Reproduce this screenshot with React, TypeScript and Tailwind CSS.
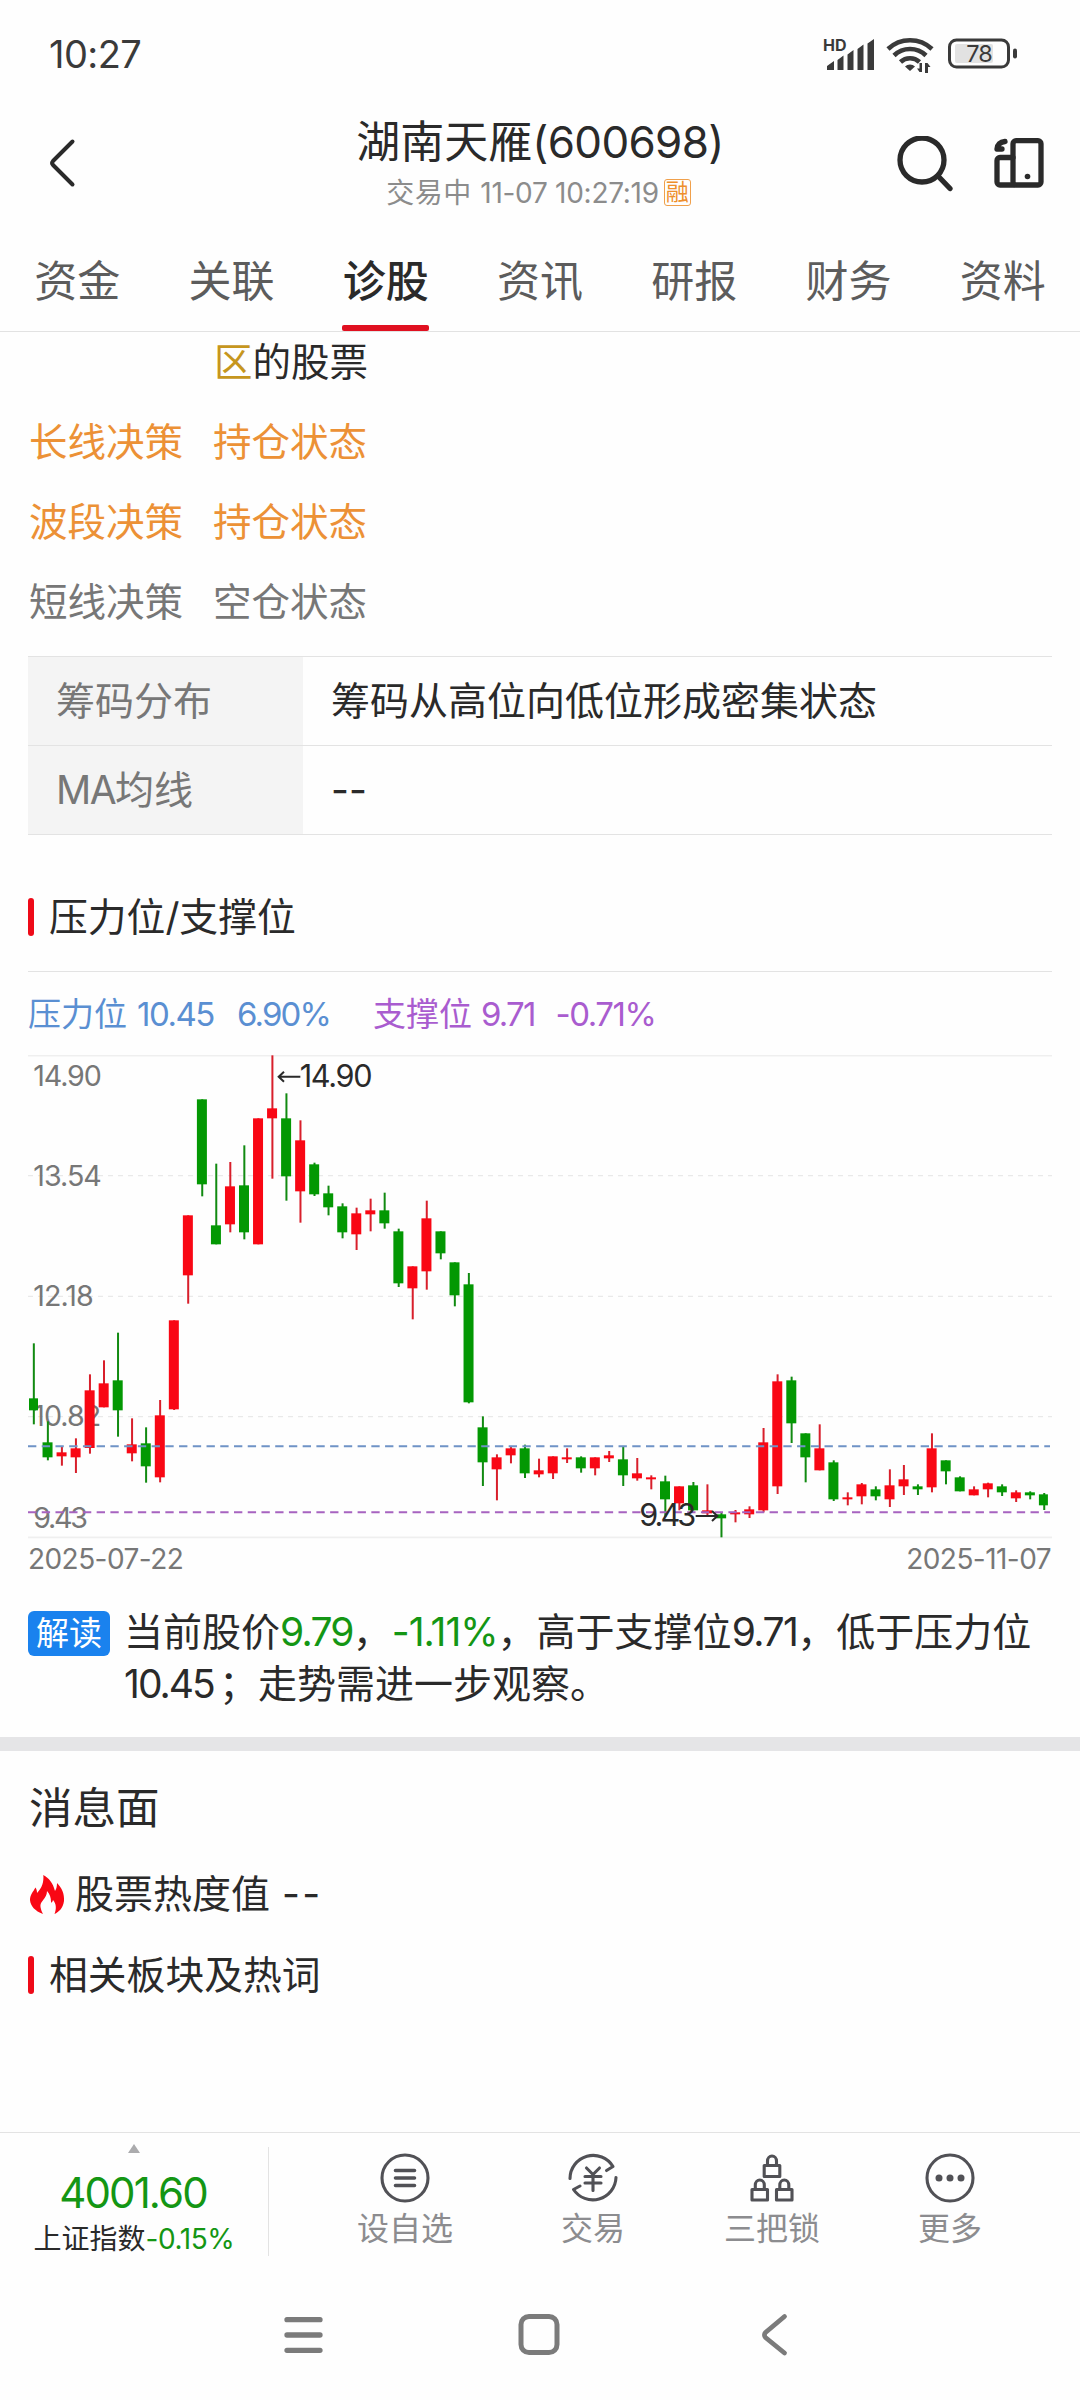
import type { ReactNode } from "react";

const TABS = ["资金", "关联", "诊股", "资讯", "研报", "财务", "资料"];

const DECISIONS = [
  { label: "长线决策", value: "持仓状态", className: "text-[#ec9136]" },
  { label: "波段决策", value: "持仓状态", className: "text-[#ec9136]" },
  { label: "短线决策", value: "空仓状态", className: "text-[#777777]" },
];

// [high, body top, body bottom, low, rising] in chart units, top of the scale = 75
const CANDLES: [number, number, number, number, 0 | 1][] = [
  [939, 1104, 1140, 1182, 0],
  [1173, 1236, 1281, 1290, 0],
  [1250, 1266, 1278, 1306, 1],
  [1224, 1254, 1281, 1328, 1],
  [1032, 1080, 1253, 1270, 1],
  [990, 1059, 1131, 1131, 1],
  [907, 1050, 1140, 1219, 0],
  [1164, 1242, 1269, 1293, 1],
  [1191, 1239, 1308, 1357, 0],
  [1109, 1155, 1341, 1356, 1],
  [870, 870, 1137, 1139, 1],
  [555, 555, 735, 820, 1],
  [207, 207, 462, 498, 0],
  [400, 585, 642, 642, 0],
  [395, 468, 582, 606, 1],
  [345, 465, 606, 627, 0],
  [264, 264, 642, 642, 1],
  [75, 234, 264, 445, 1],
  [189, 264, 438, 511, 0],
  [270, 330, 483, 577, 1],
  [397, 402, 492, 497, 0],
  [466, 489, 531, 555, 0],
  [519, 528, 606, 624, 0],
  [532, 549, 612, 659, 1],
  [505, 540, 552, 603, 1],
  [487, 540, 579, 595, 0],
  [595, 603, 759, 770, 0],
  [708, 708, 774, 867, 1],
  [511, 564, 723, 778, 1],
  [603, 603, 669, 687, 0],
  [696, 696, 795, 828, 0],
  [728, 762, 1116, 1119, 0],
  [1158, 1191, 1296, 1367, 0],
  [1272, 1281, 1317, 1410, 1],
  [1250, 1254, 1275, 1299, 1],
  [1243, 1254, 1329, 1343, 0],
  [1285, 1320, 1332, 1341, 1],
  [1278, 1278, 1329, 1346, 1],
  [1254, 1281, 1287, 1298, 1],
  [1278, 1281, 1314, 1327, 0],
  [1281, 1281, 1314, 1335, 1],
  [1262, 1275, 1284, 1295, 1],
  [1250, 1287, 1335, 1367, 0],
  [1283, 1329, 1344, 1351, 1],
  [1335, 1341, 1347, 1377, 1],
  [1336, 1353, 1407, 1460, 0],
  [1368, 1368, 1419, 1440, 1],
  [1355, 1365, 1440, 1440, 0],
  [1362, 1440, 1449, 1459, 1],
  [1447, 1452, 1464, 1521, 0],
  [1439, 1446, 1452, 1476, 1],
  [1428, 1437, 1452, 1463, 1],
  [1193, 1236, 1440, 1446, 1],
  [1032, 1053, 1368, 1391, 1],
  [1039, 1050, 1179, 1238, 0],
  [1209, 1209, 1281, 1356, 0],
  [1182, 1254, 1320, 1320, 1],
  [1290, 1296, 1407, 1412, 0],
  [1386, 1401, 1407, 1425, 1],
  [1358, 1362, 1398, 1422, 1],
  [1368, 1377, 1398, 1410, 0],
  [1317, 1365, 1407, 1430, 1],
  [1304, 1347, 1368, 1394, 1],
  [1362, 1368, 1377, 1394, 0],
  [1209, 1254, 1371, 1386, 1],
  [1290, 1290, 1323, 1362, 0],
  [1338, 1341, 1383, 1383, 0],
  [1368, 1377, 1395, 1395, 1],
  [1357, 1359, 1377, 1401, 1],
  [1362, 1368, 1386, 1397, 0],
  [1380, 1386, 1404, 1415, 1],
  [1383, 1386, 1395, 1407, 0],
  [1388, 1392, 1425, 1439, 0],
];

const AXIS = [
  { text: "14.90", y: 168, spacing: -3.5 },
  { text: "13.54", y: 467, spacing: -3 },
  { text: "12.18", y: 827, spacing: -3 },
  { text: "10.82", y: 1187, spacing: -3 },
  { text: "9.43", y: 1494, spacing: -7 },
];

function StatusBar() {
  return (
    <div className="h-[108px] pl-[49px] pr-[62px] flex items-center justify-between text-[#3a3a3a]">
      <span className="text-[38px] leading-none tracking-[-0.015em]">10:27</span>
      <svg width="194" height="38" viewBox="0 0 194 38" fill="currentColor" className="mt-1 overflow-visible">
        <text x="-1" y="13.500" fontSize="16" fontWeight="700">HD</text>
        <path d="M3 33v-4l7-5v9zM13.500 33v-10l6-4.500v14.500zM23.500 33v-15.500l6-4.500v20zM33.500 33v-21l6-4.500v25.500zM43.500 33v-26.500l6.500-4.500v31z" />
        <g fill="none" stroke="currentColor" strokeWidth="4.600">
          <path d="M64 12a32 32 0 0 1 44 0" />
          <path d="M70 18.500a23 23 0 0 1 32 0" />
          <path d="M76.500 25a14 14 0 0 1 19 0" />
        </g>
        <path d="M86 34l-5-4.500a7 7 0 0 1 10 0z" />
        <path d="M98 26v9h-2.500l-2.500-3.500h2.500v-5.500zM101 36v-10h2.500l3 4h-2.500v6z" />
        <rect x="125.500" y="3" width="59" height="27" rx="7" fill="none" stroke="currentColor" strokeWidth="3" />
        <rect x="131" y="7" width="38" height="19" rx="2" fill="#e2e2e2" />
        <rect x="189" y="11.500" width="4" height="10" rx="2" />
        <text x="155" y="25" fontSize="23.500" textAnchor="middle" letterSpacing="-1">78</text>
      </svg>
    </div>
  );
}

function Header() {
  return (
    <header className="h-[126px] flex items-start justify-between pl-[48px] pr-[36px] text-[#2a2a2a]">
      <svg width="136" height="54" viewBox="0 0 136 54" fill="none" stroke="currentColor" strokeWidth="4" strokeLinecap="round" strokeLinejoin="round" className="mt-[28px]">
        <path d="M24.500 5.500L5 25a3 3 0 0 0 0 4L24.500 48.500" />
      </svg>
      <div className="flex flex-col items-center">
        <h1 className="h-[68px] flex items-center text-[44px] leading-none whitespace-nowrap">
          湖南天雁<span className="tracking-[-0.015em]">(600698)</span>
        </h1>
        <div className="h-[33px] flex items-center gap-[5px] text-[28px] leading-none text-[#8c8c8c] whitespace-nowrap -ml-[3px]">
          <span className="tracking-[0.02em]">
            交易中 <span className="tracking-[-0.01em]">11-07 10:27:19</span>
          </span>
          <span className="size-[27px] border-[1.5px] border-[#f0a04b] rounded-[3px] text-[23px] text-[#ee8f2c] flex items-center justify-center">
            融
          </span>
        </div>
      </div>
      <div className="w-[148px] flex items-start justify-between mt-[28px]">
        <svg width="60" height="60" viewBox="0 0 60 60" fill="none" stroke="currentColor" strokeWidth="5.300" strokeLinecap="round">
          <circle cx="26" cy="24" r="22" />
          <path d="M42 40l12 12.500" />
        </svg>
        <svg width="52" height="54" viewBox="0 0 52 54" fill="none" stroke="currentColor" strokeWidth="5.300" strokeLinejoin="round" strokeLinecap="round">
          <rect x="21" y="4.700" width="28" height="44.300" rx="3" />
          <path d="M21 21.500H8a3 3 0 0 0-3 3V46a3 3 0 0 0 3 3h14" />
          <path d="M13 5.500C8 6 5.500 8.500 5 13h5" />
          <circle cx="35.500" cy="40.500" r="2.800" fill="currentColor" stroke="none" />
        </svg>
      </div>
    </header>
  );
}

function SectionTitle({ children }: { children: ReactNode }) {
  return (
    <div className="flex items-center gap-[15px]">
      <span className="w-[6px] h-[38px] rounded-[3px] bg-[#ee0a18]" />
      <span className="text-[38.8px] leading-none">{children}</span>
    </div>
  );
}

function PriceChart() {
  return (
    <svg width="1024" height="484" viewBox="84 74 3072 1452" className="block">
      <path d="M84 76H3156M84 1521H3156" stroke="#efefef" strokeWidth="5" />
      <path d="M84 436H3156M84 798H3156M84 1159H3156" stroke="#e9e9e9" strokeWidth="4" strokeDasharray="15 15" />
      <g fill="#777777" fontSize="86">
        {AXIS.map((a) => (
          <text key={a.text} x="100" y={a.y} letterSpacing={a.spacing}>{a.text}</text>
        ))}
      </g>
      {CANDLES.map(([high, top, bottom, low, up], i) => {
        const x = 101.5 + 42.1 * i;
        const edge = i === 0 ? 87 : x - 16;
        return (
          <g key={i}>
            <rect x={x - 3} y={high} width="6" height={low - high} fill={up ? "#d81f2b" : "#118a11"} />
            <rect x={edge} y={top} width={i === 0 || i === 72 ? 27 : 30} height={bottom - top} fill={up ? "#f90714" : "#039803"} />
          </g>
        );
      })}
      <path d="M84 1248H3150" stroke="#6f93c6" strokeWidth="6" strokeDasharray="25 16.200" />
      <path d="M84 1446H3150" stroke="#a763c0" strokeWidth="6" strokeDasharray="25 16.200" />
      <g fill="#2a2a2a" fontSize="92">
        <text x="899" y="171" letterSpacing="-4">14.90</text>
        <text x="1918" y="1488" letterSpacing="-9">9.43</text>
      </g>
      <g fill="none" stroke="#2a2a2a" strokeWidth="6">
        <path d="M901 139H836M852 124L836 139L852 154" />
        <path d="M2087 1457H2152M2136 1442L2152 1457L2136 1472" />
      </g>
    </svg>
  );
}

function Action({ label, className, children }: { label: string; className: string; children: ReactNode }) {
  return (
    <div className={`flex flex-col items-center ${className}`}>
      <svg width="52" height="52" viewBox="0 0 52 52" fill="none" stroke="#515156" strokeWidth="3.100" strokeLinecap="round" strokeLinejoin="round">
        {children}
      </svg>
      <span className="h-[50px] flex items-center text-[32px] leading-none text-[#8c8c8f]">{label}</span>
    </div>
  );
}

export default function App() {
  return (
    <div className="w-[1080px] h-[2400px] bg-[#fefefe] overflow-hidden flex flex-col text-[#2a2a2a] font-['Inter','Noto_Sans_CJK_SC',sans-serif]">
      <StatusBar />
      <Header />

      {/* Tabs */}
      <nav className="h-[98px] grid grid-cols-7 border-b border-[#e2e2e2] text-[43px] leading-none text-[#5c5c5c]">
        {TABS.map((tab) => (
          <div key={tab} className={`flex flex-col items-center ${tab === "诊股" ? "text-[#2a2a2a] font-medium" : ""}`}>
            <span className="h-[91px] pt-1 flex items-center">{tab}</span>
            {tab === "诊股" && <span className="w-[87px] h-[6px] rounded-[2px] bg-[#e01020]" />}
          </div>
        ))}
      </nav>

      <main className="px-7 flex flex-col">
        {/* Decisions */}
        <div className="h-[324px] text-[38.5px] leading-none">
          <div className="h-[70px] pl-[186px] flex items-center pb-[9px]">
            <span className="text-[#c6961d]">区</span>的股票
          </div>
          {DECISIONS.map((d) => (
            <div key={d.label} className={`h-[80px] flex items-center gap-[30px] pl-[1px] ${d.className}`}>
              <span>{d.label}</span>
              <span>{d.value}</span>
            </div>
          ))}
        </div>

        <div className="border-t border-[#e3e3e3] text-[39px] leading-none">
          <div className="h-[89px] flex border-b border-[#e3e3e3]">
            <div className="w-[275px] bg-[#f4f4f4] pl-7 pb-px flex items-center text-[#777777]">筹码分布</div>
            <div className="pl-7 pb-px flex items-center">筹码从高位向低位形成密集状态</div>
          </div>
          <div className="h-[89px] flex border-b border-[#e3e3e3]">
            <div className="w-[275px] bg-[#f4f4f4] pl-7 pb-px flex items-center text-[#777777]">
              <span className="tracking-[-0.04em]">MA</span>均线
            </div>
            <div className="pl-7 pb-px flex items-center">--</div>
          </div>
        </div>

        {/* Pressure / support */}
        <div className="h-[137px] pt-[63px] border-b border-[#e3e3e3]">
          <SectionTitle>压力位/支撑位</SectionTitle>
        </div>
        <div className="h-[83px] pt-[2px] flex items-center text-[33px] leading-none tracking-[-0.055em]">
          <div className="w-[345px] flex text-[#5a8fd2]">
            <span className="tracking-normal">压力位</span>
            <span className="ml-[10px] tracking-[-0.045em]">10.45</span>
            <span className="ml-[23px]">6.90%</span>
          </div>
          <div className="flex text-[#a95ccf]">
            <span className="tracking-normal">支撑位</span>
            <span className="ml-[9px]">9.71</span>
            <span className="ml-[21px] tracking-[-0.045em]">-0.71%</span>
          </div>
        </div>
        <PriceChart />
        <div className="h-[40px] pr-px flex items-center justify-between text-[28px] leading-none text-[#777777] tracking-[-0.02em]">
          <span>2025-07-22</span>
          <span>2025-11-07</span>
        </div>

        <div className="h-[158px] pt-[27px] flex items-start gap-[14px]">
          <span className="mt-[5px] w-[82px] h-[45px] rounded-[6px] bg-[#1a82ee] text-white text-[33px] leading-none flex items-center justify-center shrink-0">
            解读
          </span>
          <p className="text-[39px] leading-[52px] whitespace-nowrap">
            当前股价<span className="tracking-[-0.045em] text-[#149614]">9.79</span>，
            <span className="tracking-[-0.025em] text-[#149614]">-1.11%</span>，高于支撑位
            <span className="tracking-[-0.04em]">9.71</span>，低于压力位
            <br />
            <span className="tracking-[-0.05em] mr-[5px]">10.45</span>；走势需进一步观察。
          </p>
        </div>
      </main>

      <div className="h-[14px] bg-[#e5e5e7]" />

      {/* News */}
      <section className="h-[381px] px-7 text-[39px] leading-none">
        <h2 className="h-[115px] pl-[1px] pt-px flex items-center text-[43.5px]">消息面</h2>
        <div className="h-[55px] flex items-center gap-[9px]">
          <svg width="38" height="42" viewBox="0 0 38 42" fill="#f90714">
            <path d="M15.300 2C21 5 25 10 27 18C28.500 16 29 13 29 10C34 15 36.500 21 36 28C35 35 31 39 26.500 41C28.500 36 28.500 31 25 27C24 30 23.500 30 23 29C23 25 22 21 19 18C19 26 11.500 28 12.500 34C13 37 14 39 15 41C7 38 2.500 33 2 27C2 22 5 19 7.500 14.500C8.500 16 9 18 9 20C14 15 16 9 15.300 2Z" />
          </svg>
          <span>股票热度值</span>
          <span className="ml-[3px] tracking-[0.06em]">--</span>
        </div>
        <div className="h-[108px] flex items-center">
          <SectionTitle>相关板块及热词</SectionTitle>
        </div>
      </section>

      {/* Bottom bar */}
      <footer className="h-[152px] flex border-t border-[#e3e3e3]">
        <div className="w-[269px] h-[109px] mt-[14px] border-r border-[#e3e3e3] flex flex-col items-center leading-none">
          <svg width="12" height="9" viewBox="0 0 12 9" fill="#ababad" className="mt-[-3px] shrink-0">
            <path d="M6 0L12 9H0z" />
          </svg>
          <span className="mt-[15px] h-[50px] shrink-0 flex items-center text-[42px] text-[#149614] tracking-[-0.045em] -ml-[2px]">4001.60</span>
          <span className="h-[41px] shrink-0 flex items-center text-[28px]">
            上证指数<span className="text-[#149614] tracking-[-0.015em]">-0.15%</span>
          </span>
        </div>
        <div className="flex pt-[19px]">
          <Action label="设自选" className="w-[96px] ml-[88px]">
            <circle cx="26" cy="26" r="23" />
            <path d="M16.500 18.500h19M16.500 26h19M16.500 33.500h19" strokeWidth="3.600" />
          </Action>
          <Action label="交易" className="w-[64px] ml-[108px]">
            <path d="M3 26.500A23.200 23.200 0 0 1 46 14.500L39.500 18.500M49 25.500A23.200 23.200 0 0 1 6.500 37.500L13 34" />
            <path d="M19.500 16L26 22.500L32.500 16M26 22.500V38.500M18 24.500H34M18 31H34" />
          </Action>
          <Action label="三把锁" className="w-[96px] ml-[99px]">
            <path d="M18.200 13.500h15.600v11h-15.600zM21.500 13.500V9a4.500 5 0 0 1 9 0v4.500M6 37.500h15.500v10.500H6zM9.300 37.500V33a4.500 5 0 0 1 9 0v4.500M30.500 37.500H46v10.500H30.500zM33.800 37.500V33a4.500 5 0 0 1 9 0v4.500" />
          </Action>
          <Action label="更多" className="w-[64px] ml-[98px]">
            <circle cx="26" cy="26" r="23" />
            <g fill="#515156" stroke="none">
              <circle cx="15" cy="26" r="3.500" />
              <circle cx="26" cy="26" r="3.500" />
              <circle cx="37" cy="26" r="3.500" />
            </g>
          </Action>
        </div>
      </footer>

      {/* System navigation */}
      <div className="h-[115px] pt-[27px] flex text-[#7b7b7b]">
        <svg width="44" height="48" viewBox="0 0 44 48" fill="none" stroke="currentColor" strokeWidth="5.300" strokeLinecap="round" className="ml-[281px]">
          <path d="M6 8.700H39M6 24H39M6 39.300H39" />
        </svg>
        <svg width="44" height="48" viewBox="0 0 44 48" fill="none" stroke="currentColor" strokeWidth="5" className="ml-[192px]">
          <rect x="4" y="5.500" width="36" height="36" rx="8" />
        </svg>
        <svg width="44" height="48" viewBox="0 0 44 48" fill="none" stroke="currentColor" strokeWidth="4.800" strokeLinecap="round" className="ml-[193px]">
          <path d="M30.500 5.500L11.500 21.500a3.500 3.500 0 0 0 0 5L30.500 42" />
        </svg>
      </div>
    </div>
  );
}
